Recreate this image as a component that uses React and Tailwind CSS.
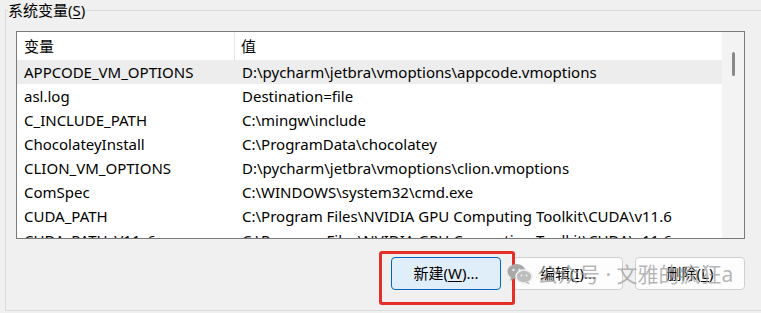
const rows = [
  ['APPCODE_VM_OPTIONS', 'D:\\pycharm\\jetbra\\vmoptions\\appcode.vmoptions'],
  ['asl.log', 'Destination=file'],
  ['C_INCLUDE_PATH', 'C:\\mingw\\include'],
  ['ChocolateyInstall', 'C:\\ProgramData\\chocolatey'],
  ['CLION_VM_OPTIONS', 'D:\\pycharm\\jetbra\\vmoptions\\clion.vmoptions'],
  ['ComSpec', 'C:\\WINDOWS\\system32\\cmd.exe'],
  ['CUDA_PATH', 'C:\\Program Files\\NVIDIA GPU Computing Toolkit\\CUDA\\v11.6'],
  ['CUDA_PATH_V11_6', 'C:\\Program Files\\NVIDIA GPU Computing Toolkit\\CUDA\\v11.6'],
];

function WeChatIcon() {
  return (
    <svg width="26" height="22" viewBox="0 0 26 22" className="shrink-0">
      <ellipse cx="9.5" cy="8.5" rx="9" ry="7.5" fill="#a8a8a8" />
      <path d="M4 14 L3 18 L8 15 Z" fill="#a8a8a8" />
      <ellipse cx="17" cy="13.5" rx="8" ry="6.5" fill="#bdbdbd" stroke="#f0f0f0" strokeWidth="1.5" />
      <path d="M21 18.5 L23 21.5 L18 19.5 Z" fill="#bdbdbd" />
      <circle cx="6.5" cy="7" r="1.2" fill="#f0f0f0" />
      <circle cx="12.5" cy="7" r="1.2" fill="#f0f0f0" />
      <circle cx="14.5" cy="12.5" r="1" fill="#f0f0f0" />
      <circle cx="19.5" cy="12.5" r="1" fill="#f0f0f0" />
    </svg>
  );
}

export default function App() {
  return (
    <div className="relative w-[761px] h-[313px] overflow-hidden bg-[#f0f0f0] text-[15px] text-black font-['Noto_Sans','Noto_Sans_CJK_SC',sans-serif]">
      <fieldset className="ml-[5px] w-[780px] h-[311px] border border-r-0 border-[#dcdcdc]">
        <legend className="ml-[2px] pr-[1px] leading-[20px]">
          系统变量(<span className="underline underline-offset-2">S</span>)
        </legend>

        {/* variable list */}
        <div className="mt-[11px] ml-[10px] w-[729px] h-[208px] border border-[#7a7a7a] bg-white flex overflow-hidden">
          <div className="flex-1 flex flex-col">
            <div className="flex h-[28px] shrink-0 items-center">
              <div className="w-[218px] h-full pl-[7px] flex items-center border-r border-[#e5e5e5]">变量</div>
              <div className="pl-[6px]">值</div>
            </div>
            {rows.map(([name, value], i) => (
              <div
                key={name}
                className={`flex h-[24px] shrink-0 items-center whitespace-nowrap ${i === 0 ? 'bg-[#ededed]' : ''}`}
              >
                <div className="w-[218px] pl-[7px]">{name}</div>
                <div className="pl-[7px]">{value}</div>
              </div>
            ))}
          </div>
          <div className="w-[22px] bg-[#f3f3f3] flex justify-center pt-[20px]">
            <div className="w-[3px] h-[24px] rounded-full bg-[#8a8a8a]" />
          </div>
        </div>

        {/* buttons */}
        <div className="relative mt-[18px] ml-[385px] w-[354px] flex gap-3 text-[15px]">
          <div className="relative">
            <button className="w-[110px] h-[33px] rounded-[4px] border border-[#0067c0] bg-[#e0eef9]">
              新建(<span className="underline underline-offset-2">W</span>)...
            </button>
            <span className="absolute -left-[12px] -top-[6px] w-[136px] h-[54px] border-[3px] border-[#e5302a] rounded-[3px]" />
          </div>
          <button className="w-[110px] h-[33px] rounded-[4px] border border-[#d0d0d0] bg-[#fdfdfd]">
            编辑(<span className="underline underline-offset-2">I</span>)...
          </button>
          <button className="w-[110px] h-[33px] rounded-[4px] border border-[#d0d0d0] bg-[#fdfdfd]">
            删除(<span className="underline underline-offset-2">L</span>)
          </button>

          {/* watermark */}
          <div className="absolute z-10 left-[116px] top-[5px] flex items-center gap-[4px] whitespace-nowrap text-[21px] leading-[24px] text-[#9e9e9e]/75 pointer-events-none">
            <WeChatIcon />
            <span>公众号 · 文雅的疯狂a</span>
          </div>
        </div>
      </fieldset>
    </div>
  );
}
